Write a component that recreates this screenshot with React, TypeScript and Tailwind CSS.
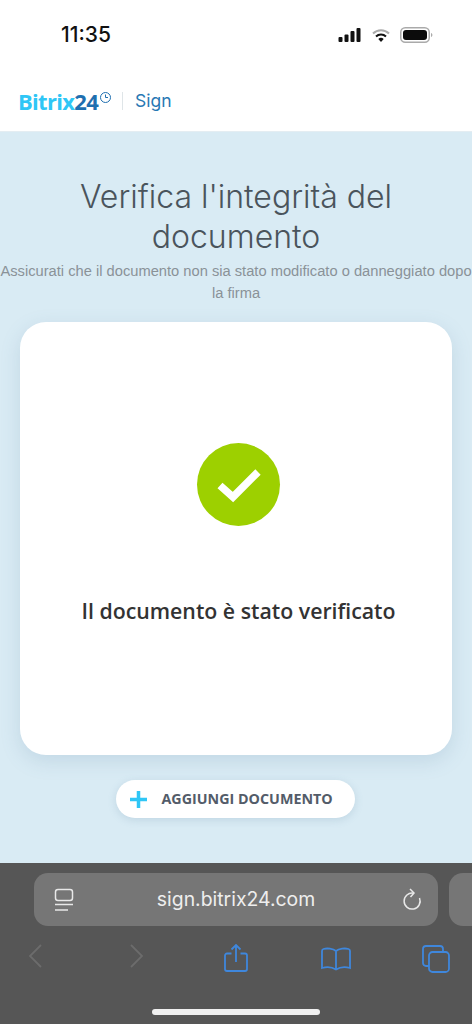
export default function App() {
  return (
    <div className="w-[472px] h-[1024px] overflow-hidden flex flex-col bg-white font-['Inter',sans-serif]">
      {/* Status bar */}
      <div className="h-[70px] shrink-0 pl-[61px] pr-[39px] flex items-start justify-between pt-[24px]">
        <span className="text-[21px] leading-[22px] font-medium text-[#111]">11:35</span>
        <div className="flex items-center gap-[9px] pt-[3px]">
          <svg width="24" height="16" viewBox="0 0 24 16" className="text-[#111]">
            <rect x="0.5" y="10" width="4" height="5" rx="1" fill="currentColor" />
            <rect x="6.5" y="7.5" width="4" height="7.5" rx="1" fill="currentColor" />
            <rect x="12.5" y="4" width="4" height="11" rx="1" fill="currentColor" />
            <rect x="18.5" y="1" width="4" height="14" rx="1" fill="currentColor" />
          </svg>
          <svg width="20" height="15" viewBox="0 0 20 15">
            <path d="M2 5.5a11.5 11.5 0 0 1 16 0" fill="none" stroke="#aaa" strokeWidth="2" />
            <path d="M5 8.5a7.2 7.2 0 0 1 10 0" fill="none" stroke="#111" strokeWidth="2" />
            <path d="M7.3 11a3.8 3.8 0 0 1 5.4 0L10 14z" fill="#111" />
          </svg>
          <svg width="33" height="16" viewBox="0 0 33 16">
            <rect x="0.75" y="0.75" width="28.5" height="14.5" rx="4.5" fill="none" stroke="#aaa" strokeWidth="1.5" />
            <rect x="3" y="3" width="24" height="10" rx="3" fill="#0c0c0c" />
            <path d="M31 6v4c.8-.3 1.4-1 1.4-2s-.6-1.700-1.400-2z" fill="#aaa" />
          </svg>
        </div>
      </div>

      {/* Header */}
      <div className="h-[62px] shrink-0 pl-[18px] flex items-center border-b border-[#e4edf2]">
        <div className="flex items-start font-['Open_Sans',sans-serif] font-bold text-[22px] leading-[26px] tracking-[-0.7px]">
          <span className="text-[#2fc6f6]">Bitrix</span>
          <span className="text-[#1f6fb0]">24</span>
          <svg width="13" height="13" viewBox="0 0 13 13" className="ml-[1px] mt-[3px] text-[#1f6fb0]">
            <circle cx="6.5" cy="6.500" r="5" fill="none" stroke="currentColor" strokeWidth="1" />
            <path d="M6.500 3.500v3h2.500" fill="none" stroke="currentColor" strokeWidth="1" />
          </svg>
        </div>
        <div className="w-px h-[18px] bg-[#dfe5e8] ml-[10px]" />
        <span className="ml-[12px] text-[17.500px] leading-[24px] text-[#2878b4]">Sign</span>
      </div>

      {/* Main */}
      <div className="flex-1 bg-[#d9ebf4] flex flex-col items-center pt-[45px]">
        <h1 className="w-[340px] text-center text-[32px] leading-[40px] font-light text-[#4a545c]">
          Verifica l'integrità del documento
        </h1>
        <p className="mt-[3px] w-[472px] text-center text-[14.7px] leading-[22px] text-[#8a9298] font-['Liberation_Sans',sans-serif] whitespace-nowrap">
          Assicurati che il documento non sia stato modificato o danneggiato dopo
          <br />
          la firma
        </p>
        <div className="mt-[18px] w-[432px] h-[433px] shrink-0 rounded-[26px] bg-white shadow-[0_6px_20px_rgba(90,130,160,0.18)] flex flex-col items-center pt-[121px] pl-[5px]">
          <div className="w-[83px] h-[83px] rounded-full bg-[#9dd000] flex items-center justify-center">
            <svg width="48" height="38" viewBox="0 0 48 38">
              <path d="M5 19.500 L18 31 L43 6" fill="none" stroke="#fff" strokeWidth="7.500" />
            </svg>
          </div>
          <p className="mt-[71px] text-[21.3px] leading-[28px] font-semibold text-[#333] font-['Open_Sans',sans-serif] whitespace-nowrap">
            Il documento è stato verificato
          </p>
        </div>
        <button className="mt-[25px] w-[239px] h-[38px] mr-[2px] rounded-full bg-white shadow-[0_2px_8px_rgba(90,130,160,0.2)] flex items-center pl-[14px]">
          <svg width="17" height="17" viewBox="0 0 17 17">
            <path d="M8.500 0v17M0 8.500h17" stroke="#2fc6f6" strokeWidth="3.500" />
          </svg>
          <span className="ml-[15px] text-[14.3px] font-bold text-[#535c69] font-['Open_Sans',sans-serif] whitespace-nowrap">
            AGGIUNGI DOCUMENTO
          </span>
        </button>
      </div>

      {/* Safari toolbar */}
      <div className="h-[161px] shrink-0 bg-[#565656] relative overflow-hidden">
        <div className="flex gap-[11px] pl-[34px] pt-[10px]">
          <div className="w-[404px] h-[53px] shrink-0 rounded-[14px] bg-[#767676] flex items-center justify-between pl-[20px] pr-[16px]">
            <svg width="20" height="24" viewBox="0 0 20 24" fill="none" stroke="#e8e8e8" strokeWidth="1.500">
              <rect x="1.500" y="1.500" width="17" height="11" rx="2.500" />
              <path d="M1 16.500h18M1 22h13" />
            </svg>
            <span className="text-[19.4px] text-[#eeeeee] font-normal pr-[4px]">sign.bitrix24.com</span>
            <svg width="20" height="24" viewBox="0 0 20 24" fill="none" stroke="#e8e8e8" strokeWidth="1.500">
              <path d="M11.500 5.200A8 8 0 1 0 17.500 10" />
              <path d="M8 1l4 4-3.500 4" />
            </svg>
          </div>
          <div className="w-[60px] h-[53px] shrink-0 rounded-[14px] bg-[#767676]" />
        </div>
        <div className="absolute left-[28px] top-[81px]">
          <svg width="14" height="24" viewBox="0 0 14 24" fill="none" stroke="#6c6c6c" strokeWidth="1.800">
            <path d="M13 1L2 12l11 11" />
          </svg>
        </div>
        <div className="absolute left-[130px] top-[81px]">
          <svg width="14" height="24" viewBox="0 0 14 24" fill="none" stroke="#6c6c6c" strokeWidth="1.800">
            <path d="M1 1l11 11L1 23" />
          </svg>
        </div>
        <div className="absolute left-[224px] top-[81px]">
          <svg width="24" height="28" viewBox="0 0 24 28" fill="none" stroke="#3f87dc" strokeWidth="1.800">
            <path d="M7.500 9.500H3a2 2 0 0 0-2 2V25a2 2 0 0 0 2 2h18a2 2 0 0 0 2-2V11.500a2 2 0 0 0-2-2h-4.500" />
            <path d="M12 18V1M7.500 5.500L12 1l4.500 4.500" />
          </svg>
        </div>
        <div className="absolute left-[321px] top-[84px]">
          <svg width="30" height="24" viewBox="0 0 30 24" fill="none" stroke="#3f87dc" strokeWidth="1.800">
            <path d="M15 4C12 1.500 6 1 2.500 2 1.500 2.300 1 3 1 4v17c4-1.200 10-1 14 1.500 4-2.500 10-2.700 14-1.500V4c0-1-.5-1.700-1.500-2C24 1 18 1.500 15 4zM15 4v18" />
          </svg>
        </div>
        <div className="absolute left-[422px] top-[82px]">
          <svg width="28" height="28" viewBox="0 0 28 28" fill="none" stroke="#3f87dc" strokeWidth="1.800">
            <path d="M7 21H4a3 3 0 0 1-3-3V4a3 3 0 0 1 3-3h14a3 3 0 0 1 3 3v3" />
            <rect x="7" y="7" width="20" height="20" rx="3.500" />
          </svg>
        </div>
        <div className="absolute left-[152px] top-[146px] w-[168px] h-[6px] rounded-full bg-[#f0f0f0]" />
      </div>
    </div>
  );
}
